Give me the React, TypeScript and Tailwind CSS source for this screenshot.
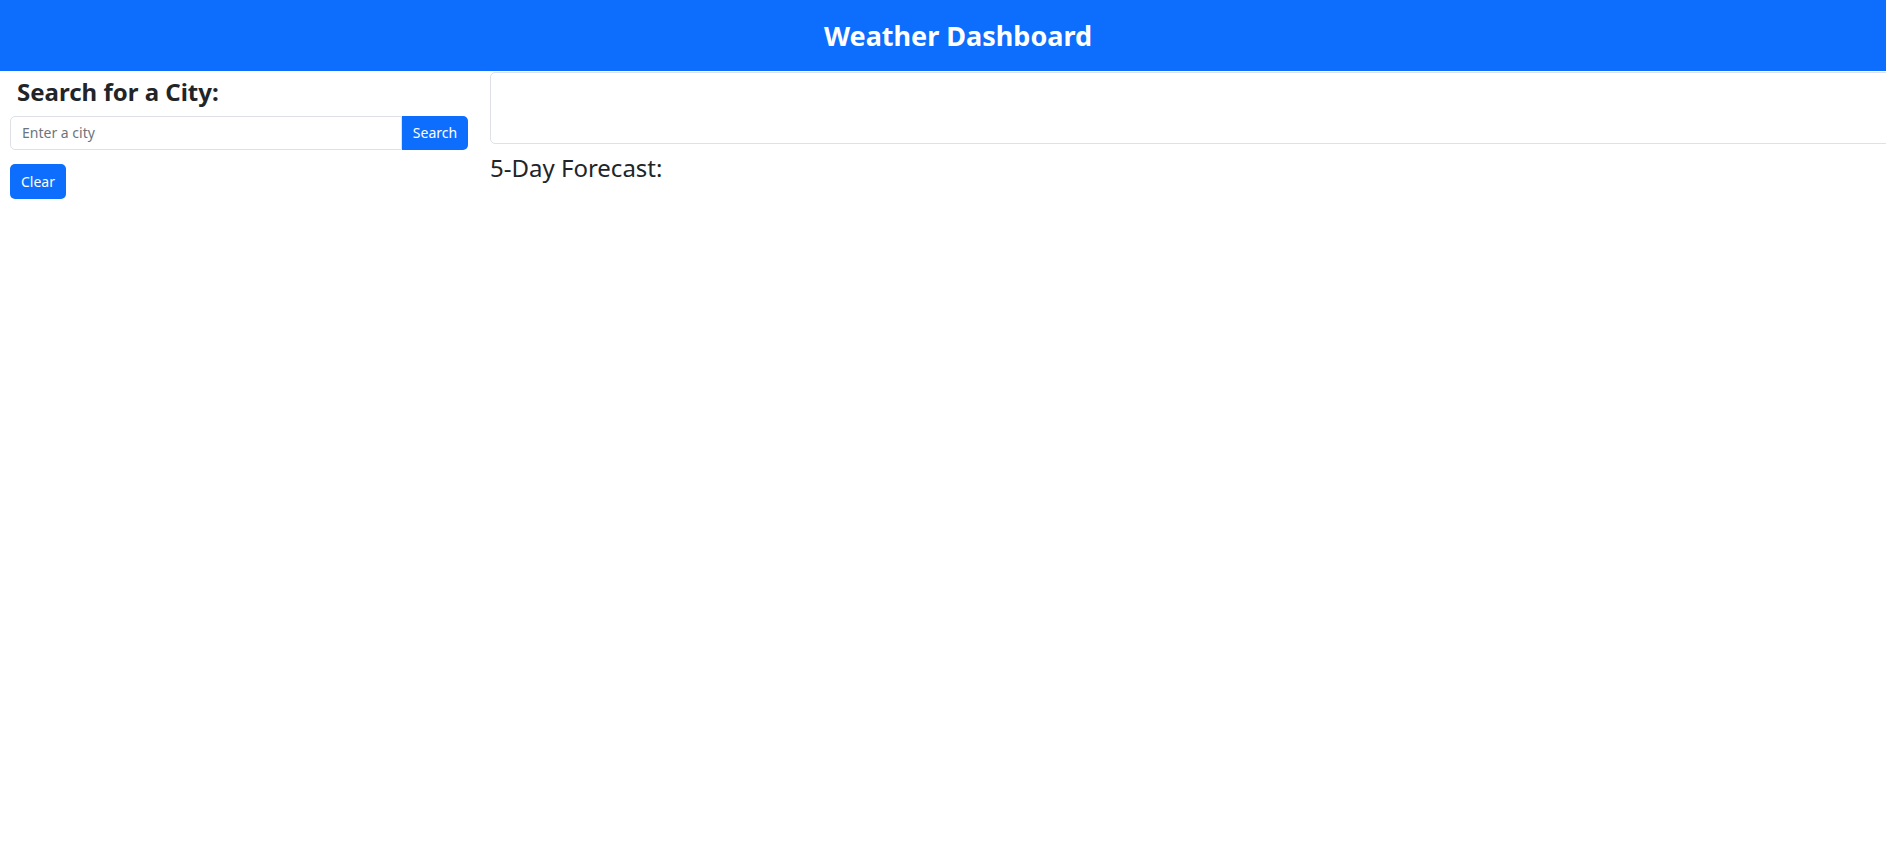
export default function App() {
  return (
    <div className="min-h-screen w-full overflow-x-hidden bg-white font-['Noto_Sans',sans-serif] text-[#212529]">
      {/* Header */}
      <header className="flex h-[71px] w-full items-center justify-center bg-[#0d6efd]">
        <h1 className="ml-[30px] mt-[2px] text-[27px] font-bold text-white">Weather Dashboard</h1>
      </header>

      <div className="flex w-full">
        {/* Sidebar */}
        <aside className="w-[480px] shrink-0 pl-[10px] pr-[12px]">
          <h2 className="mt-[7px] pl-[7px] text-[24px] font-bold leading-[1.2]">Search for a City:</h2>
          <div className="mt-[9px] flex h-[34px]">
            <input
              type="text"
              placeholder="Enter a city"
              className="h-full flex-1 rounded-l-[5px] border border-[#dee2e6] px-[11px] text-[14px] text-[#212529] placeholder:text-[#6c757d] focus:outline-none"
            />
            <button className="h-full w-[66px] rounded-r-[5px] bg-[#0d6efd] text-[14px] text-white">Search</button>
          </div>
          <button className="mt-[14px] h-[35px] w-[56px] rounded-[5px] bg-[#0d6efd] text-[14px] text-white">Clear</button>
        </aside>

        {/* Main */}
        <main className="flex-1 pl-[10px]">
          <div className="mt-[1px] -mr-[6px] h-[72px] rounded-[5px] border border-[#dee2e6]" />
          <h3 className="mt-[10px] text-[24px] leading-[1.2]">5-Day Forecast:</h3>
        </main>
      </div>
    </div>
  );
}
